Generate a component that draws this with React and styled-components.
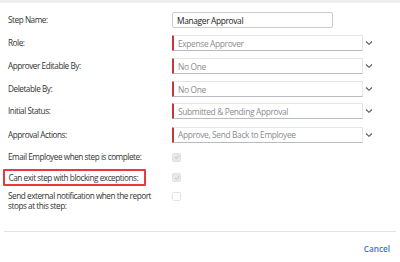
import React from "react";
import styled, { css, createGlobalStyle } from "styled-components";

const Global = createGlobalStyle`
  html, body { margin: 0; padding: 0; background: #fff; }
  body { font-family: "Open Sans", "Liberation Sans", sans-serif; }
`;

const Page = styled.div`
  width: 400px;
  height: 262px;
  background: #fff;
  display: flex;
  flex-direction: column;
  overflow: hidden;
`;

const TopBand = styled.div`
  height: 3px;
  flex: none;
  background: #eeeeee;
`;

const Form = styled.div`
  display: flex;
  flex-direction: column;
  padding: 9px 0 0 8px;
`;

const Row = styled.div`
  display: grid;
  grid-template-columns: 164px 1fr;
  align-items: ${(p) => (p.$top ? "start" : "center")};
  height: ${(p) => p.$h || 16}px;
  margin-top: ${(p) => p.$gap || 0}px;
`;

const highlight = css`
  margin-left: -5px;
  width: 143px;
  height: 17px;
  box-sizing: border-box;
  display: flex;
  align-items: center;
  padding: 0 3.5px;
  border: 2px solid #e8393e;
  border-radius: 1px;
`;

const Label = styled.div`
  font-size: 8.2px;
  letter-spacing: -0.45px;
  color: #333;
  line-height: 10px;
  white-space: nowrap;
  ${(p) => p.$highlight && highlight}
`;

const FieldWrap = styled.div`
  display: flex;
  align-items: center;
  gap: 2px;
`;

const fieldText = css`
  height: 16px;
  box-sizing: border-box;
  font-size: 8.4px;
  letter-spacing: -0.35px;
  padding-left: 4px;
  display: flex;
  align-items: center;
`;

const TextInput = styled.div`
  ${fieldText}
  width: 161px;
  border: 1px solid #c9ccd1;
  border-radius: 2px;
  color: #222;
`;

const Select = styled.div`
  ${fieldText}
  width: 191px;
  border: 1px solid #e4e6e9;
  border-bottom-color: #b8bcc2;
  border-left: 2.5px solid #c9353b;
  border-radius: 1px;
  color: #8a8d91;
`;

const Chevron = () => (
  <svg width="8" height="6" viewBox="0 0 8 6">
    <path d="M1 1.5 L4 4.3 L7 1.5" fill="none" stroke="#555" strokeWidth="1.1" />
  </svg>
);

const Check = styled.div`
  width: 9px;
  height: 9px;
  box-sizing: border-box;
  border: 1px solid #e2e2e2;
  border-radius: 1.5px;
  background: ${(p) => (p.$checked ? "#e8e8e8" : "#fff")};
  display: flex;
  align-items: center;
  justify-content: center;
  margin-top: ${(p) => p.$mt || 0}px;
`;

const CheckMark = () => (
  <svg width="6" height="6" viewBox="0 0 6 6">
    <path d="M1 3 L2.5 4.5 L5 1.2" fill="none" stroke="#c4c4c4" strokeWidth="1" />
  </svg>
);

const Divider = styled.div`
  margin: 20px 4px 0 4px;
  height: 1px;
  background: #e3e3e3;
`;

const Footer = styled.div`
  display: flex;
  justify-content: flex-end;
  padding: 12px 10px 0 0;
`;

const CancelBtn = styled.span`
  font-size: 8.2px;
  font-weight: 600;
  line-height: 10px;
  color: #3b72d9;
`;

const selects = [
  ["Role:", "Expense Approver", 7],
  ["Approver Editable By:", "No One", 7],
  ["Deletable By:", "No One", 7],
  ["Initial Status:", "Submitted & Pending Approval", 6],
  ["Approval Actions:", "Approve, Send Back to Employee", 7.5],
];

export default function App() {
  return (
    <Page>
      <Global />
      <TopBand />
      <Form>
        <Row>
          <Label>Step Name:</Label>
          <FieldWrap>
            <TextInput>Manager Approval</TextInput>
          </FieldWrap>
        </Row>
        {selects.map(([l, v, g]) => (
          <Row key={l} $gap={g}>
            <Label>{l}</Label>
            <FieldWrap>
              <Select>{v}</Select>
              <Chevron />
            </FieldWrap>
          </Row>
        ))}
        <Row $gap={6.5}>
          <Label>Email Employee when step is complete:</Label>
          <Check $checked><CheckMark /></Check>
        </Row>
        <Row $gap={4} $h={17}>
          <Label $highlight>Can exit step with blocking exceptions:</Label>
          <Check $checked><CheckMark /></Check>
        </Row>
        <Row $gap={5} $h={20} $top>
          <Label>
            Send external notification when the report
            <br />
            stops at this step:
          </Label>
          <Check $mt={1} />
        </Row>
      </Form>
      <Divider />
      <Footer>
        <CancelBtn>Cancel</CancelBtn>
      </Footer>
    </Page>
  );
}
